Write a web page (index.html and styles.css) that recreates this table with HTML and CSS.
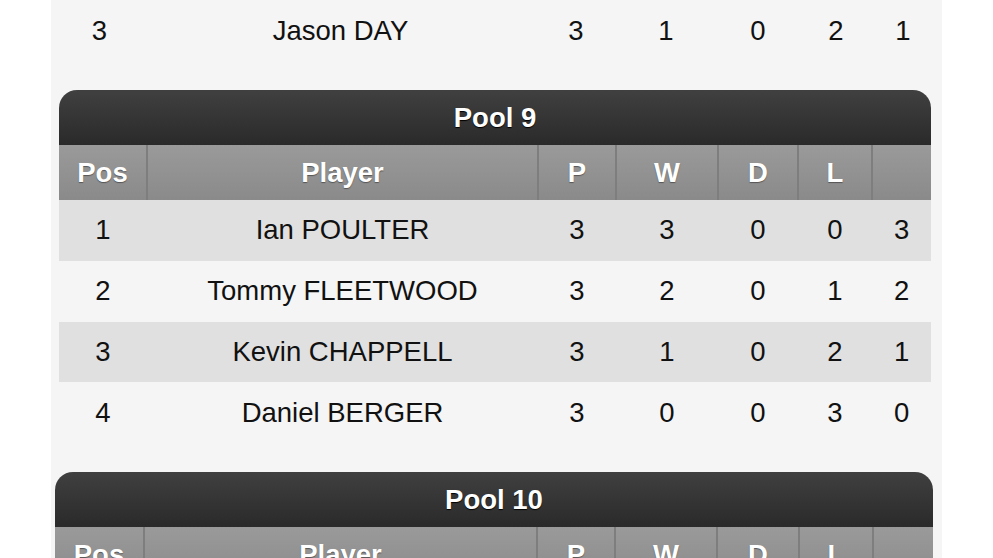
FILE: index.html
```html
<!DOCTYPE html>
<html>
<head>
<meta charset="utf-8">
<link rel="stylesheet" href="styles.css">
</head>
<body>
<div class="page">
  <div class="panel">
    <table class="pool pool-wide pool-tail">
      <colgroup>
        <col class="c-pos"><col class="c-player"><col class="c-p"><col class="c-w"><col class="c-d"><col class="c-l"><col class="c-pts">
      </colgroup>
      <tbody>
        <tr class="even"><td>3</td><td>Jason DAY</td><td>3</td><td>1</td><td>0</td><td>2</td><td>1</td></tr>
      </tbody>
    </table>

    <table class="pool pool-narrow">
      <colgroup>
        <col class="n-pos"><col class="n-player"><col class="n-p"><col class="n-w"><col class="n-d"><col class="n-l"><col class="n-pts">
      </colgroup>
      <thead>
        <tr><th class="title" colspan="7">Pool 9</th></tr>
        <tr class="cols"><th>Pos</th><th>Player</th><th>P</th><th>W</th><th>D</th><th>L</th><th></th></tr>
      </thead>
      <tbody>
        <tr class="odd"><td>1</td><td>Ian POULTER</td><td>3</td><td>3</td><td>0</td><td>0</td><td>3</td></tr>
        <tr class="even"><td>2</td><td>Tommy FLEETWOOD</td><td>3</td><td>2</td><td>0</td><td>1</td><td>2</td></tr>
        <tr class="odd"><td>3</td><td>Kevin CHAPPELL</td><td>3</td><td>1</td><td>0</td><td>2</td><td>1</td></tr>
        <tr class="even"><td>4</td><td>Daniel BERGER</td><td>3</td><td>0</td><td>0</td><td>3</td><td>0</td></tr>
      </tbody>
    </table>

    <table class="pool pool-wide">
      <colgroup>
        <col class="c-pos"><col class="c-player"><col class="c-p"><col class="c-w"><col class="c-d"><col class="c-l"><col class="c-pts">
      </colgroup>
      <thead>
        <tr><th class="title" colspan="7">Pool 10</th></tr>
        <tr class="cols"><th>Pos</th><th>Player</th><th>P</th><th>W</th><th>D</th><th>L</th><th></th></tr>
      </thead>
      <tbody>
        <tr class="odd"><td>1</td><td>&nbsp;</td><td></td><td></td><td></td><td></td><td></td></tr>
      </tbody>
    </table>
  </div>
</div>
</body>
</html>
```

FILE: styles.css
```css
html, body {
  margin: 0;
  padding: 0;
  background: #ffffff;
  height: 100%;
  overflow: hidden;
}

.page {
  display: flex;
  height: 558px;
  padding-left: 51px;
}

.panel {
  width: 891px;
  background: #f5f5f5;
  padding-left: 4px;
  display: flex;
  flex-direction: column;
  gap: 29px;
  box-sizing: border-box;
}

.pool {
  border-collapse: collapse;
  table-layout: fixed;
  font-family: "Liberation Sans", Arial, sans-serif;
  font-size: 27.5px;
  color: #111111;
  flex: none;
}

.pool-wide { width: 878px; }
.pool-narrow { width: 872px; margin-left: 4px; }

.c-pos { width: 89px; }
.c-player { width: 393px; }
.c-p { width: 78px; }
.c-w { width: 102px; }
.c-d { width: 82px; }
.c-l { width: 74px; }
.c-pts { width: 60px; }

.n-pos { width: 88px; }
.n-player { width: 391px; }
.n-p { width: 78px; }
.n-w { width: 102px; }
.n-d { width: 80px; }
.n-l { width: 74px; }
.n-pts { width: 59px; }

.pool th, .pool td {
  padding: 0;
  text-align: center;
  vertical-align: middle;
}

.pool .title {
  height: 55px;
  font-weight: bold;
  color: #ffffff;
  text-shadow: 0 1px 1px #000;
  background: linear-gradient(#404040, #2a2a2a);
  border-radius: 18px 18px 0 0;
}

.pool .cols th {
  height: 55px;
  font-weight: bold;
  color: #ffffff;
  text-shadow: 0 1px 1px #555;
  background: linear-gradient(#9a9a9a, #8a8a8a);
  border-left: 2px solid #7e7e7e;
}

.pool .cols th:first-child {
  border-left: none;
}

.pool tbody td {
  height: 60.75px;
}

.pool tr.odd td { background: #e0e0e0; }
.pool tr.even td { background: #f5f5f5; }

.pool-tail tbody td {
  height: 61px;
}
```
